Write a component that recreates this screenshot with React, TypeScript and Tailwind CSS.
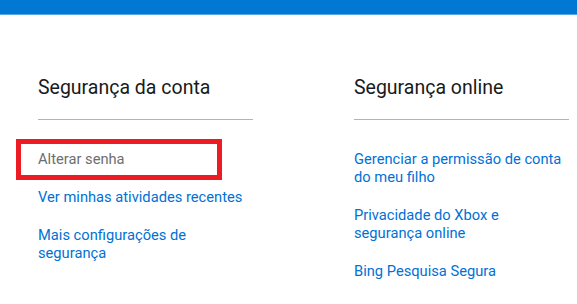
const links = {
  left: [
    { text: 'Ver minhas atividades recentes' },
    { text: 'Mais configurações de segurança' },
  ],
  right: [
    { text: 'Gerenciar a permissão de conta do meu filho' },
    { text: 'Privacidade do Xbox e segurança online' },
    { text: 'Bing Pesquisa Segura' },
  ],
}

function Column({ title, children }: { title: string; children: React.ReactNode }) {
  return (
    <div className="w-[215px]">
      <h2 className="pt-[2px] text-[19.5px] leading-[28px] text-[#1a1a1a]">{title}</h2>
      <div className="mt-[17px] h-px bg-[#b3b3b3]" />
      <ul className="mt-[30px] flex flex-col gap-[20px]">{children}</ul>
    </div>
  )
}

function LinkItem({ text }: { text: string }) {
  return (
    <li>
      <a href="#" className="block text-[14.7px] leading-[18px] text-[#0071d6]">
        {text}
      </a>
    </li>
  )
}

export default function App() {
  return (
    <div
      className="w-[577px] h-[304px] bg-white overflow-hidden"
      style={{ fontFamily: 'Roboto, "Noto Sans", sans-serif' }}
    >
      <div className="h-[15px] bg-[#0078d4] border-b border-[#5aa7e8]" />
      <div className="flex gap-[101px] pl-[38px] pt-[57px]">
        <Column title="Segurança da conta">
          <li className="relative">
            <span className="block text-[14.7px] leading-[18px] text-[#6e6e6e]">Alterar senha</span>
            <div className="absolute left-[-22px] top-[-11px] w-[206px] h-[41px] border-[5px] border-[#ed1c24]" />
          </li>
          {links.left.map((l) => (
            <LinkItem key={l.text} text={l.text} />
          ))}
        </Column>
        <Column title="Segurança online">
          {links.right.map((l) => (
            <LinkItem key={l.text} text={l.text} />
          ))}
        </Column>
      </div>
    </div>
  )
}
